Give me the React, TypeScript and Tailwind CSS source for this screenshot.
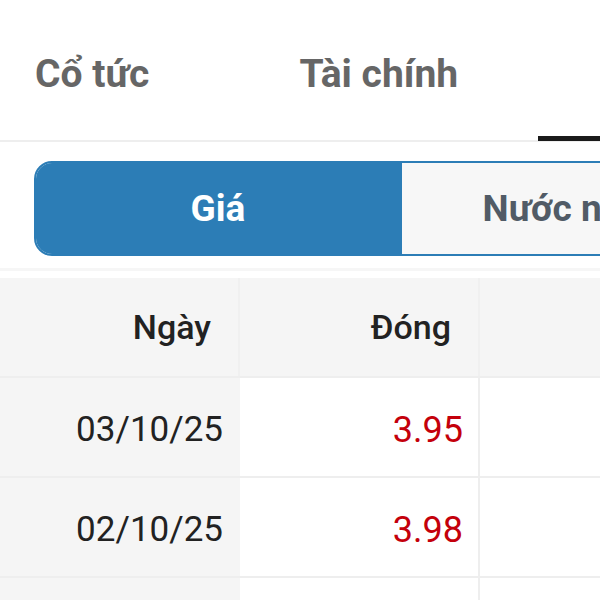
import React from "react";

const rows = [
  { date: "03/10/25", close: "3.95" },
  { date: "02/10/25", close: "3.98" },
  { date: "01/10/25", close: "4.01" },
];

const App = () => {
  return (
    <div className="w-[600px] h-[600px] overflow-hidden bg-white font-['Roboto',sans-serif]">
      {/* Top tabs */}
      <div className="relative flex h-[142px] w-[900px] items-center border-b-2 border-[#eeeeee] pt-[8px]">
        <div className="ml-[35px] text-[39px] font-bold text-[#666666]">Cổ tức</div>
        <div className="ml-[150px] text-[39px] font-bold text-[#666666]">Tài chính</div>
        <div className="relative ml-[80px] flex h-full w-[320px] items-center justify-center text-[39px] font-bold text-[#222222]">
          <span className="pl-[160px]">Hồ sơ</span>
          <span className="absolute bottom-[-1px] left-0 h-[5px] w-full bg-[#1a1a1a]"></span>
        </div>
      </div>

      {/* Segmented control */}
      <div className="mt-[19px] ml-[34px] flex h-[95px] w-[732px] overflow-hidden rounded-[18px] border-2 border-[#2c7db6]">
        <div className="flex w-[364px] items-center justify-center bg-[#2c7db6] text-[37px] font-bold text-white">
          Giá
        </div>
        <div className="flex flex-1 items-center justify-center border-l-2 border-[#2c7db6] bg-[#f7f7f7] pr-[10px] text-[37px] font-bold text-[#515b66]">
          Nước ngoài
        </div>
      </div>

      {/* Table */}
      <div className="mt-[12px] h-[3px] bg-[#f6f6f6]"></div>
      <div className="mt-[7px] w-[720px]">
        <div className="grid h-[100px] grid-cols-[240px_240px_240px] border-b-2 border-[#eeeeee] bg-[#f5f5f5]">
          <div className="flex items-center justify-end border-r-2 border-[#f0f0f0] pr-[27px] text-[34px] font-medium text-[#222222]">
            Ngày
          </div>
          <div className="flex items-center justify-end border-r-2 border-[#f0f0f0] pr-[27px] text-[34px] font-medium text-[#222222]">
            Đóng
          </div>
          <div className="flex items-center justify-end pr-[27px] text-[34px] font-medium text-[#222222]">
            Mở
          </div>
        </div>
        {rows.map((r) => (
          <div key={r.date} className="grid h-[100px] grid-cols-[240px_240px_240px] border-b-2 border-[#eeeeee]">
            <div className="flex items-center justify-end bg-[#f5f5f5] pt-[6px] pr-[17px] text-[35px] text-[#222222]">
              {r.date}
            </div>
            <div className="flex items-center justify-end border-r-2 border-[#eeeeee] pt-[6px] pr-[15px] text-[36px] text-[#c4000b]">
              {r.close}
            </div>
            <div className="flex items-center justify-end pt-[6px] pr-[17px] text-[35px] text-[#c4000b]"></div>
          </div>
        ))}
      </div>
    </div>
  );
};

export default App;
